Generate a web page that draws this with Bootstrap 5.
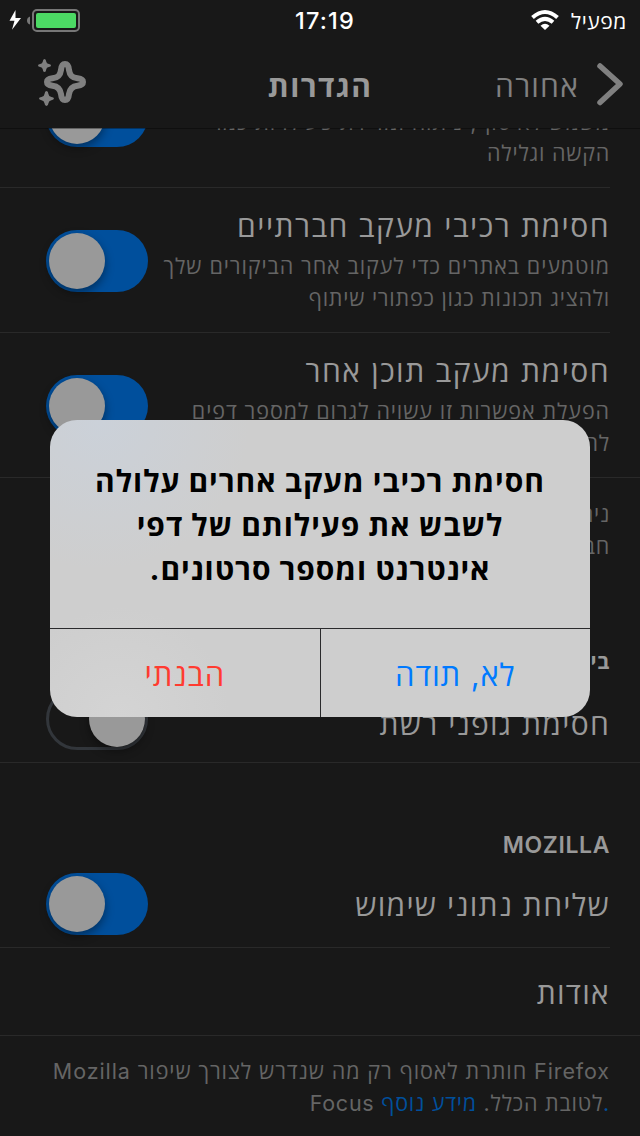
<!DOCTYPE html>
<html lang="he" dir="rtl">
<head>
<meta charset="utf-8">
<meta name="viewport" content="width=device-width, initial-scale=1">
<title>הגדרות</title>
<link href="https://cdn.jsdelivr.net/npm/bootstrap@5.3.0/dist/css/bootstrap.min.css" rel="stylesheet">
<style>
  body { margin: 0; background: #181818; color: #999; font-family: Inter, "Open Sans", "DejaVu Sans", sans-serif; overflow: hidden; }
  .screen { width: 640px; height: 1136px; }
  .status { height: 40px; color: #fff; direction: ltr; }
  .topbar { height: 88px; direction: ltr; position: relative; z-index: 1; box-shadow: 0 1px rgba(0,0,0,.35); }
  .edge { flex: 0 0 230px; }
  .clock { flex: 1 1 0; font-size: 23.5px; font-weight: 500; line-height: 42px; letter-spacing: 1.15px; padding-left: 10px; white-space: nowrap; }
  .carrier { font-size: 21px; line-height: 43px; letter-spacing: .6px; padding-right: 13px; }
  .topbar h1 { flex: 1 1 0; font-size: 30px; font-weight: 700; line-height: 93px; letter-spacing: 1.4px; }
  .back-link { font-size: 30px; line-height: 93px; letter-spacing: 1.2px; color: #808080; padding-right: 15px; }
  .pane { height: 1008px; }
  .scrolled { margin-top: -85px; }
  .setting { position: relative; height: 145px; padding: 18px 30px 0 46px; }
  .setting::after { content: ""; position: absolute; left: 0; right: 30px; bottom: 0; height: 1px; background: #292929; }
  .setting.wide::after { right: 0; }
  .setting.fonts { height: 79px; padding-top: 4px; }
  .setting.usage { height: 88px; padding-top: 13px; }
  .setting.about { height: 88px; padding-top: 25px; }
  .name { font-size: 30px; line-height: 40px; letter-spacing: 1.27px; white-space: nowrap; }
  .name.airy { letter-spacing: 1.45px; }
  .desc { font-size: 21.500px; line-height: 32px; letter-spacing: .75px; color: #656565; white-space: nowrap; }
  .desc .airy { letter-spacing: .9px; }
  .note { height: 170px; padding: 20px 30px 0; }
  .foot { padding: 19px 30px 0; }
  .section-title { font-size: 23px; font-weight: 600; line-height: 29px; letter-spacing: .6px; padding: 0 30px; }
  .section-title.perf { font-size: 21px; font-weight: 700; line-height: 28px; height: 36px; }
  .switch { width: 102px; height: 62px; border-radius: 31px; background: #004f9c; padding: 3px; direction: ltr; flex: none; }
  .switch i { display: block; width: 56px; height: 56px; border-radius: 50%; background: #999; box-shadow: 0 4px 10px rgba(0,0,0,.4); }
  .switch.off { background: none; border: 3px solid #32363b; padding: 0; }
  .switch.off i { margin-left: 40px; }
  .learn-more { color: #004f9c; }
  .alert-box { position: absolute; left: 50px; top: 420px; width: 540px; height: 297px; border-radius: 27px; overflow: hidden; color: #000; z-index: 2;
    background: radial-gradient(circle at 50px 0, #cbd1d9, rgba(206,206,206,0) 150px), radial-gradient(circle at 70px 297px, #d4d4d4, rgba(206,206,206,0) 110px), #cecece; }
  .alert-text { height: 208px; padding-top: 39px; font-size: 30px; font-weight: 700; line-height: 44px; letter-spacing: .95px; white-space: nowrap; }
  .alert-actions { height: 89px; border-top: 1px solid #2a2a2c; }
  .alert-actions button { flex: 1 1 0; border: 0; background: none; font-size: 31px; letter-spacing: .85px; padding: 5px 0 0; }
  .alert-actions button + button { border-right: 1px solid #2a2a2c; }
  .deny { color: #007aff; }
  .accept { color: #ff3b30; }
</style>
</head>
<body>
<div class="screen position-relative overflow-hidden">
  <div class="status d-flex">
    <div class="edge"><svg width="90" height="40"><path d="M15.500 10L9.500 20.800h5l-2.500 9L21 18h-5.500z" fill="#fff"/><path d="M30 16.500v8q-3-1-3-4t3-4z" fill="#777"/><rect x="33" y="10" width="46" height="21" rx="4" fill="none" stroke="#777" stroke-width="2"/><rect x="36" y="13" width="40" height="15" rx="2" fill="#4cd964"/></svg></div>
    <div class="text-center clock">17:19</div>
    <div class="edge d-flex justify-content-end carrier">
      <svg width="28" height="40"><g fill="none" stroke="#fff" stroke-width="4"><path d="M1.500 17.500Q14 6.500 26.500 17.500"/><path d="M6 22.300Q14 15.300 22 22.300"/></g><path d="M9.500 25.800q4.500-4 9 0L14 30z" fill="#fff"/></svg>
      <span class="ps-2 ms-1">מפעיל</span>
    </div>
  </div>
  <header class="topbar d-flex">
    <div class="edge"><svg width="100" height="88"><path d="M65 24C68 24 68.700 26.500 69 30C69.800 36 72.500 37.700 77.500 38.300C81 38.700 83 39.500 83 42C83 44.500 81 45.300 77.500 45.700C72.500 46.300 69.800 48.500 69 54C68.700 57.500 68 60 65 60C62 60 61.300 57.500 61 54C60.200 48.500 57.500 46.300 52.500 45.700C49 45.300 47 44.500 47 42C47 39.500 49 38.700 52.500 38.300C57.500 37.700 60.200 36 61 30C61.300 26.500 62 24 65 24z" fill="none" stroke="#808080" stroke-width="6" stroke-linejoin="round"/><path id="spark" d="M44.500 19q1.500 0 1.700 2.500.3 2.300 2.600 2.600Q51 24.300 51 25.500t-2.200 1.400q-2.300.3-2.600 2.600Q46 32 44.500 32t-1.700-2.500q-.3-2.300-2.600-2.600Q38 26.700 38 25.500t2.200-1.400q2.300-.3 2.600-2.600Q43 19 44.500 19z" fill="#808080"/><use href="#spark" transform="translate(-4.700 29.200) scale(1.150)"/></svg></div>
    <h1 class="m-0 text-center">הגדרות</h1>
    <div class="edge d-flex justify-content-end back-link"><span>אחורה</span><svg class="ms-3" width="30" height="88"><path d="M5 26L25 44L5 62.500" fill="none" stroke="#808080" stroke-width="5.500" stroke-linecap="round" stroke-linejoin="round"/></svg></div>
  </header>
  <main class="pane overflow-hidden">
    <section class="scrolled">
      <div class="setting d-flex justify-content-between">
        <div><div class="name">חסימת רכיבי ניתוח</div><div class="desc mt-1"><span class="airy position-relative" style="top:1px">משמש לאיסוף, ניתוח ומדידת פעילויות כמו</span><br>הקשה וגלילה</div></div>
        <div class="switch mt-4"><i></i></div>
      </div>
      <div class="setting d-flex justify-content-between">
        <div><div class="name airy">חסימת רכיבי מעקב חברתיים</div><div class="desc mt-1"><span class="airy">מוטמעים באתרים כדי לעקוב אחר הביקורים שלך</span><br>ולהציג תכונות כגון כפתורי שיתוף</div></div>
        <div class="switch mt-4"><i></i></div>
      </div>
      <div class="setting wide d-flex justify-content-between">
        <div><div class="name airy">חסימת מעקב תוכן אחר</div><div class="desc mt-1"><span class="airy">הפעלת אפשרות זו עשויה לגרום למספר דפים</span><br>להיטען באופן שגוי</div></div>
        <div class="switch mt-4"><i></i></div>
      </div>
      <div class="desc note">ניתן לשלוט בהגדרות עבור אתרים<br>חברתיים ורכיבי מעקב</div>
    </section>
    <section>
      <h2 class="section-title perf m-0">ביצועים</h2>
      <div class="setting wide fonts d-flex justify-content-between">
        <div class="name pt-3">חסימת גופני רשת</div>
        <div class="switch off"><i></i></div>
      </div>
    </section>
    <section class="pt-5">
      <h2 class="section-title m-0 mt-3 pt-1">MOZILLA</h2>
      <div class="setting usage d-flex justify-content-between">
        <div class="name pt-2 mt-1">שליחת נתוני שימוש</div>
        <div class="switch"><i></i></div>
      </div>
      <div class="setting wide about"><div class="name">אודות</div></div>
      <p class="desc foot m-0 text-end" dir="ltr"><span class="airy">Mozilla חותרת לאסוף רק מה שנדרש לצורך שיפור Firefox</span><br>Focus לטובת הכלל. <span class="learn-more">מידע נוסף.</span></p>
    </section>
  </main>
  <div class="alert-box" role="alertdialog">
    <div class="alert-text text-center">חסימת רכיבי מעקב אחרים עלולה<br>לשבש את פעילותם של דפי<br>אינטרנט ומספר סרטונים.</div>
    <div class="alert-actions d-flex"><button class="deny">לא, תודה</button><button class="accept">הבנתי</button></div>
  </div>
</div>
<script src="https://cdn.jsdelivr.net/npm/bootstrap@5.3.0/dist/js/bootstrap.bundle.min.js"></script>
</body>
</html>
